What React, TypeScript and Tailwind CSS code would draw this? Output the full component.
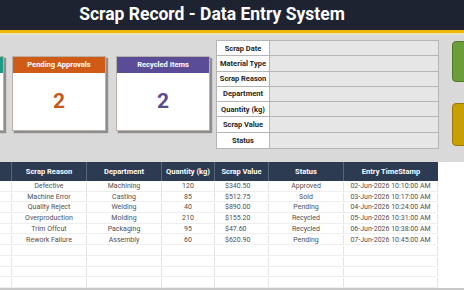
import React from "react";

const rows = [
  ["Defective", "Machining", "120", "$340.50", "Approved", "02-Jun-2026 10:10:00 AM"],
  ["Machine Error", "Casting", "85", "$512.75", "Sold", "03-Jun-2026 10:17:00 AM"],
  ["Quality Reject", "Welding", "40", "$890.00", "Pending", "04-Jun-2026 10:24:00 AM"],
  ["Overproduction", "Molding", "210", "$155.20", "Recycled", "05-Jun-2026 10:31:00 AM"],
  ["Trim Offcut", "Packaging", "95", "$47.60", "Recycled", "06-Jun-2026 10:38:00 AM"],
  ["Rework Failure", "Assembly", "60", "$620.90", "Pending", "07-Jun-2026 10:45:00 AM"],
  ["", "", "", "", "", ""],
  ["", "", "", "", "", ""],
  ["", "", "", "", "", ""],
  ["", "", "", "", "", ""],
];

const labels = ["Scrap Date", "Material Type", "Scrap Reason", "Department", "Quantity (kg)", "Scrap Value", "Status"];

export default function App() {
  return (
    <div className="w-[464px] h-[290px] overflow-hidden bg-white flex flex-col" style={{ fontFamily: "Roboto, 'Noto Sans', sans-serif" }}>
      {/* Title bar */}
      <div className="h-[30px] shrink-0 bg-[#1e2331] flex items-center justify-center pr-[40px]">
        <span className="text-white font-bold text-[17.5px] leading-none">Scrap Record - Data Entry System</span>
      </div>
      <div className="h-[3px] shrink-0 bg-[#f1b708]" />
      <div className="h-[2px] shrink-0 bg-[#ece3c0]" />

      {/* Gray panel */}
      <div className="h-[127px] shrink-0 bg-[#d9d9d9] flex overflow-hidden">
        {/* Cards */}
        <div className="flex items-start pt-[21px] shrink-0 ml-[-90px]">
          <Card title="" value="" head="bg-[#1f9a85]" num="text-[#1f9a85]" />
          <div className="w-[8px] shrink-0" />
          <Card title="Pending Approvals" value="2" head="bg-[#cf5b17]" num="text-[#c8581a]" />
          <div className="w-[10px] shrink-0" />
          <Card title="Recycled Items" value="2" head="bg-[#5b4c98]" num="text-[#5a4b8e]" />
        </div>

        {/* Form */}
        <div className="ml-[6px] mt-[5px] w-[223px] shrink-0 h-[109px] border border-[#b5b5b5] bg-white flex flex-col">
          {labels.map((l, i) => (
            <div key={l} className={`flex h-[15.5px] ${i < labels.length - 1 ? "border-b border-[#b5b5b5]" : ""}`}>
              <div className="w-[53px] shrink-0 flex items-center justify-center text-[7.5px] font-bold text-[#262626] border-r border-[#b5b5b5] bg-white whitespace-nowrap">
                {l}
              </div>
              <div className="flex-1 bg-[#e6e6e6]" />
            </div>
          ))}
        </div>

        {/* Buttons */}
        <div className="ml-[13px] shrink-0 flex flex-col gap-[21px] mt-[6px]">
          <div className="w-[30px] h-[41px] rounded-[4px] bg-[#6b9e3a] border border-[#4e7a28]" />
          <div className="w-[30px] h-[43px] rounded-[4px] bg-[#c9a003] border border-[#98780a]" />
        </div>
      </div>

      {/* Data table */}
      <div className="flex flex-col w-[438px]">
        <div className="flex h-[19px] bg-[#2c3a52] text-white text-[7.5px] font-bold">
          <HCell w="w-[12px]" text="" />
          <HCell w="w-[75px]" text="Scrap Reason" />
          <HCell w="w-[75px]" text="Department" />
          <HCell w="w-[53px]" text="Quantity (kg)" />
          <HCell w="w-[54px]" text="Scrap Value" />
          <HCell w="w-[75px]" text="Status" />
          <HCell w="w-[94px]" text="Entry TimeStamp" last />
        </div>
        {rows.map((r, i) => (
          <div key={i} className="flex h-[10.7px] text-[7px] text-[#505050] border-b border-[#efefef] pt-[1px]">
            <div className="w-[12px] border-r border-[#e3e3e3]" />
            <div className="w-[75px] border-r border-[#e3e3e3] flex items-center justify-center">{r[0]}</div>
            <div className="w-[75px] border-r border-[#e3e3e3] flex items-center justify-center">{r[1]}</div>
            <div className="w-[53px] border-r border-[#e3e3e3] flex items-center justify-center">{r[2]}</div>
            <div className="w-[54px] border-r border-[#e3e3e3] flex items-center pl-[10px]">{r[3]}</div>
            <div className="w-[75px] border-r border-[#e3e3e3] flex items-center justify-center">{r[4]}</div>
            <div className="w-[94px] border-r border-[#e3e3e3] flex items-center justify-center">{r[5]}</div>
          </div>
        ))}
      </div>
      <div className="flex-1" />
      <div className="h-[3px] shrink-0 bg-[#c8c8c8]" />
    </div>
  );
}

function HCell({ w, text, last }: { w: string; text: string; last?: boolean }) {
  return (
    <div className={`${w} flex items-center justify-center whitespace-nowrap ${last ? "" : "border-r border-[#56657c]"}`}>{text}</div>
  );
}

function Card({ title, value, head, num }: { title: string; value: string; head: string; num: string }) {
  return (
    <div className="w-[94px] h-[75px] shrink-0 bg-white border border-[#b9b0a8] shadow-[2px_2px_1px_rgba(80,80,80,0.55)] flex flex-col">
      <div className={`h-[16px] ${head} flex items-center justify-center text-white text-[7.5px] font-bold`}>{title}</div>
      <div className={`flex-1 flex items-center justify-center text-[21px] font-bold ${num}`}>{value}</div>
    </div>
  );
}
